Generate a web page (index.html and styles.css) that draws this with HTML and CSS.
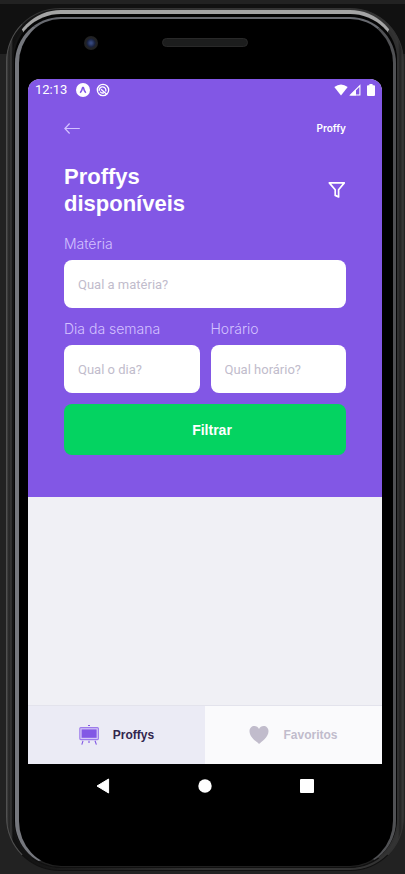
FILE: index.html
```html
<!DOCTYPE html>
<html lang="pt-BR">
<head>
<meta charset="utf-8">
<meta name="viewport" content="width=device-width, initial-scale=1">
<title>Proffy</title>
<link rel="stylesheet" href="styles.css">
</head>
<body>
<div class="shell">
<div class="rim">
<div class="bezel">
  <div class="hardware">
    <span class="camera"></span>
    <span class="speaker"></span>
  </div>
  <div class="screen">
    <div class="status">
      <span class="time">12:13</span>
      <svg width="14" height="14" viewBox="0 0 14 14"><circle cx="7" cy="7" r="7" fill="#fff"/><path d="M4.2 9.8 Q5.8 8.2 6.6 4.6 H7.4 Q8.2 8.2 9.8 9.8" fill="none" stroke="#8257e5" stroke-width="1.6" stroke-linejoin="round"/></svg>
      <svg class="status-app" width="14" height="14" viewBox="0 0 14 14" fill="none" stroke="#fff"><circle cx="7" cy="7" r="5.7" stroke-width="1.3"/><path d="M3.2 8 A3.4 3.4 0 1 1 9.6 8.6 M5 6.2 L11 11.4 M4 8.6 Q5.6 10.6 7.8 9.8" stroke-width="1.3"/></svg>
      <span class="spacer"></span>
      <svg width="14" height="12" viewBox="0 0 14 12"><path d="M0.3 3 Q7 -2.2 13.7 3 L7 11.4 Z" fill="#fff"/></svg>
      <svg class="signal" width="12" height="12" viewBox="0 0 12 12"><path d="M10.9 1.6 V11 H1.5 Z" fill="none" stroke="#fff" stroke-width="1.1"/><path d="M1 11.4 L7 5.4 V11.4 Z" fill="#fff"/></svg>
      <svg class="battery" width="8" height="12" viewBox="0 0 8 12"><path d="M2.4 0 H5.6 V1.2 H7 Q8 1.2 8 2.2 V11 Q8 12 7 12 H1 Q0 12 0 11 V2.2 Q0 1.2 1 1.2 H2.4 Z" fill="#fff"/></svg>
    </div>
    <header class="header">
      <div class="topbar">
        <button class="icon-button" type="button" aria-label="Voltar">
          <svg width="16" height="12" viewBox="0 0 16 12"><path d="M15.8 6.5 H1 M5.6 1.5 L0.9 6.5 L5.6 11.5" fill="none" stroke="#d4c2ff" stroke-width="1.2"/></svg>
        </button>
        <span class="logo">Proffy</span>
      </div>
      <div class="title-row">
        <h1>Proffys<br>disponíveis</h1>
        <button class="icon-button" type="button" aria-label="Filtros">
          <svg width="18" height="18" viewBox="0 0 18 18"><path d="M1.3 1.9 H16.3 L10.6 8.8 V15.9 L7.2 14.4 V8.8 Z" fill="none" stroke="#fff" stroke-width="1.7" stroke-linejoin="round"/></svg>
        </button>
      </div>
      <form class="filters">
        <div class="field wide">
          <label for="subject">Matéria</label>
          <input id="subject" type="text" placeholder="Qual a matéria?">
        </div>
        <div class="field">
          <label for="day">Dia da semana</label>
          <input id="day" type="text" placeholder="Qual o dia?">
        </div>
        <div class="field">
          <label for="hour">Horário</label>
          <input id="hour" type="text" placeholder="Qual horário?">
        </div>
        <button class="submit wide" type="button">Filtrar</button>
      </form>
    </header>
    <main class="list"></main>
    <nav class="tabs">
      <a class="tab active" href="#proffys">
        <svg width="20" height="20" viewBox="0 0 20 20"><path d="M9 0 H11 V1 H9 Z" fill="#8257e5"/><path d="M4 15.8 L2.8 19.6 M16 15.8 L17.4 19.6 M10 15.8 V18" stroke="#8257e5" stroke-width="1.1"/><rect x=".8" y="2.6" width="18.6" height="12" rx="1" fill="#d5c8f7" stroke="#9d7beb" stroke-width="1.1"/><rect x="2.6" y="4.4" width="15" height="8.4" fill="#8257e5"/></svg>
        <span>Proffys</span>
      </a>
      <a class="tab" href="#favoritos">
        <svg width="20" height="20" viewBox="0 0 20 20"><path d="M10 19 C8 17 0.5 12.2 0.5 6.2 C0.5 3 2.8 1 5.3 1 C7.5 1 9.2 2.2 10 4 C10.8 2.2 12.5 1 14.7 1 C17.2 1 19.5 3 19.5 6.2 C19.5 12.2 12 17 10 19 Z" fill="#c1bccc"/></svg>
        <span>Favoritos</span>
      </a>
    </nav>
  </div>
  <div class="system-nav">
    <button type="button" aria-label="Voltar (sistema)"><svg width="14" height="16" viewBox="0 0 14 16"><path d="M12.6 1 V15 L1 8 Z" fill="#fff" stroke="#fff" stroke-linejoin="round"/></svg></button>
    <button type="button" aria-label="Início"><svg width="14" height="14" viewBox="0 0 14 14"><circle cx="7" cy="7" r="6.7" fill="#fff"/></svg></button>
    <button type="button" aria-label="Recentes"><svg width="14" height="14" viewBox="0 0 14 14"><rect width="14" height="14" rx="1" fill="#fff"/></svg></button>
  </div>
</div>
</div>
</div>
</body>
</html>
```
FILE: styles.css
```css
* {
  box-sizing: border-box;
}

body {
  margin: 0;
  min-height: 100vh;
  padding: 8px 1px 3px 6px;
  display: flex;
  background: linear-gradient(#222 4px, #111 4px, #111 54px, #222 54px);
  font-family: Roboto, "Liberation Sans", sans-serif;
}

.shell,
.rim,
.bezel {
  flex: 1;
  display: flex;
  flex-direction: column;
  min-width: 0;
}

.shell {
  border: 1px solid;
  border-color: #333 #333 #111 #505050;
  border-radius: 54px;
  padding: 1px 4px 2px 5px;
  background: linear-gradient(90deg, #444 0, #222 2px, #383838 4px, #111 6px, #333 50%, #333 calc(100% - 5px), #222 calc(100% - 3px), #3a3a3a);
}

.rim {
  border: solid;
  border-width: 4px 2px 1px 2px;
  border-color: #a5a5a5 #303030 #111 #151515;
  border-radius: 49px;
  padding: 3px 1px 0 1px;
  background: #050505;
}

.bezel {
  border: solid;
  border-width: 2px 3px 1px 4px;
  border-color: #686a70 #505154 #202020 #75777d;
  border-radius: 46px;
  padding: 0 11px 0 9px;
  background: #000;
}

.hardware {
  height: 60px;
  padding: 19px 56px 0;
  display: grid;
  grid-template-columns: 1fr auto 1fr;
  align-items: start;
}

.camera {
  width: 14px;
  height: 14px;
  margin-top: -2px;
  border-radius: 50%;
  background: radial-gradient(circle, #35477c 0 1px, #18203c 4px, #222326 5px, #202020 7px);
}

.speaker {
  width: 86px;
  height: 9px;
  border: 1px solid #292929;
  border-radius: 5px;
  background: #1c1d1d;
}

.screen {
  flex: 1;
  display: flex;
  flex-direction: column;
  overflow: hidden;
  border-radius: 12px 12px 0 0;
  background: #f0f0f5;
}

.status {
  height: 21px;
  padding: 0 7px;
  display: flex;
  align-items: center;
  background: #8257e5;
  color: #fff;
}

.time {
  margin-right: 9px;
  font-size: 13px;
  line-height: 20px;
}

.status-app {
  margin-left: 6px;
}

.spacer {
  flex: 1;
}

.signal {
  margin-left: 1px;
}

.battery {
  margin-left: 6px;
}

.header {
  padding: 18px 36px 42px;
  background: #8257e5;
}

.topbar,
.title-row {
  display: flex;
  justify-content: space-between;
  align-items: center;
}

.topbar {
  height: 20px;
}

.title-row {
  margin: 25px 0 17px;
}

.icon-button {
  display: flex;
  padding: 0;
  border: 0;
  background: none;
}

.logo {
  color: #fff;
  font: 600 10px/20px Inter, sans-serif;
}

h1 {
  margin: 0;
  color: #fff;
  font: bold 22px/27px "Liberation Sans", sans-serif;
}

.filters {
  display: grid;
  grid-template-columns: 1fr 1fr;
  gap: 11px;
}

.wide {
  grid-column: 1 / -1;
}

.field {
  display: flex;
  flex-direction: column;
  gap: 6px;
  min-width: 0;
}

label {
  color: #d4c2ff;
  font: 300 14px/20px Inter, sans-serif;
}

input {
  width: 100%;
  height: 48px;
  padding: 0 14px;
  border: 0;
  border-radius: 8px;
  background: #fff;
  color: #32264d;
  font: 13px Roboto, sans-serif;
}

input::placeholder {
  color: #c1bccc;
  opacity: 1;
}

.submit {
  height: 51px;
  padding: 0 0 0 14px;
  border: 0;
  border-radius: 8px;
  background: #04d361;
  color: #fff;
  font: bold 14px "Liberation Sans", sans-serif;
}

.list {
  flex: 1;
}

.tabs {
  display: flex;
  border-top: 1px solid #e3e3ec;
}

.tab {
  flex: 1;
  height: 58px;
  display: flex;
  align-items: center;
  justify-content: center;
  gap: 14px;
  background: #fafafc;
  color: #c1bccc;
  font: bold 12px "Liberation Sans", sans-serif;
  text-decoration: none;
}

.tab.active {
  background: #ebebf5;
  color: #32264d;
}

.system-nav {
  height: 102px;
  padding: 14px 68px 0;
  display: flex;
  justify-content: space-between;
  align-items: flex-start;
}

.system-nav button {
  display: flex;
  align-items: center;
  height: 16px;
  padding: 0;
  border: 0;
  background: none;
}
```
